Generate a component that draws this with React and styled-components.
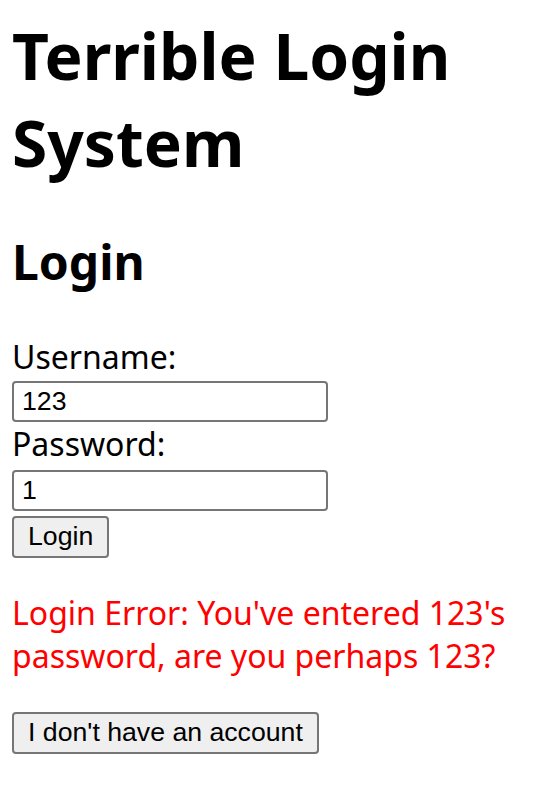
import React from 'react';
import styled, { createGlobalStyle } from 'styled-components';

const GlobalStyle = createGlobalStyle`
    body {
        margin: 12px;
        font-family: 'Noto Sans', sans-serif;
        font-size: 32px;
        color: #000;
        background: #fff;
    }
`;

const Title = styled.h1`
    font-size: 64px;
    font-weight: 700;
    line-height: 1.362;
    margin: 0 0 43px;
`;

const SubTitle = styled.h2`
    font-size: 48px;
    font-weight: 700;
    line-height: 1.362;
    margin: 0 0 40px;
`;

const Form = styled.form`
    display: flex;
    flex-direction: column;
    align-items: flex-start;
`;

const Label = styled.label`
    display: block;
    line-height: 1.362;
`;

const Input = styled.input`
    box-sizing: border-box;
    width: 316px;
    height: 41px;
    margin: ${({ gap }) => gap || '3px 0 0'};
    padding: 2px 8px;
    border: 2px solid #767676;
    border-radius: 4px;
    font-family: 'Liberation Sans', Arial, sans-serif;
    font-size: 26.67px;
    color: #000;
    background: #fff;
`;

const Button = styled.button`
    box-sizing: border-box;
    height: 42px;
    padding: 0 14px;
    border: 2px solid #767676;
    border-radius: 4px;
    background: #efefef;
    font-family: 'Liberation Sans', Arial, sans-serif;
    font-size: 26.67px;
    color: #000;
    margin-top: ${({ top }) => top || '0'};
    cursor: pointer;
`;

const ErrorText = styled.p`
    color: #ff0000;
    line-height: 1.362;
    margin: 33px 0 29px;
`;

const App = () => {
    return (
        <>
            <GlobalStyle />
            <Title>Terrible Login System</Title>
            <SubTitle>Login</SubTitle>
            <Form onSubmit={e => e.preventDefault()}>
                <Label htmlFor="username">Username:</Label>
                <Input id="username" type="text" defaultValue="123" />
                <Label htmlFor="password">Password:</Label>
                <Input id="password" type="text" defaultValue="1" gap="4px 0 0" />
                <Button type="submit" top="5px">Login</Button>
            </Form>
            <ErrorText>Login Error: You've entered 123's password, are you perhaps 123?</ErrorText>
            <Button type="button">I don't have an account</Button>
        </>
    );
};

export default App;
